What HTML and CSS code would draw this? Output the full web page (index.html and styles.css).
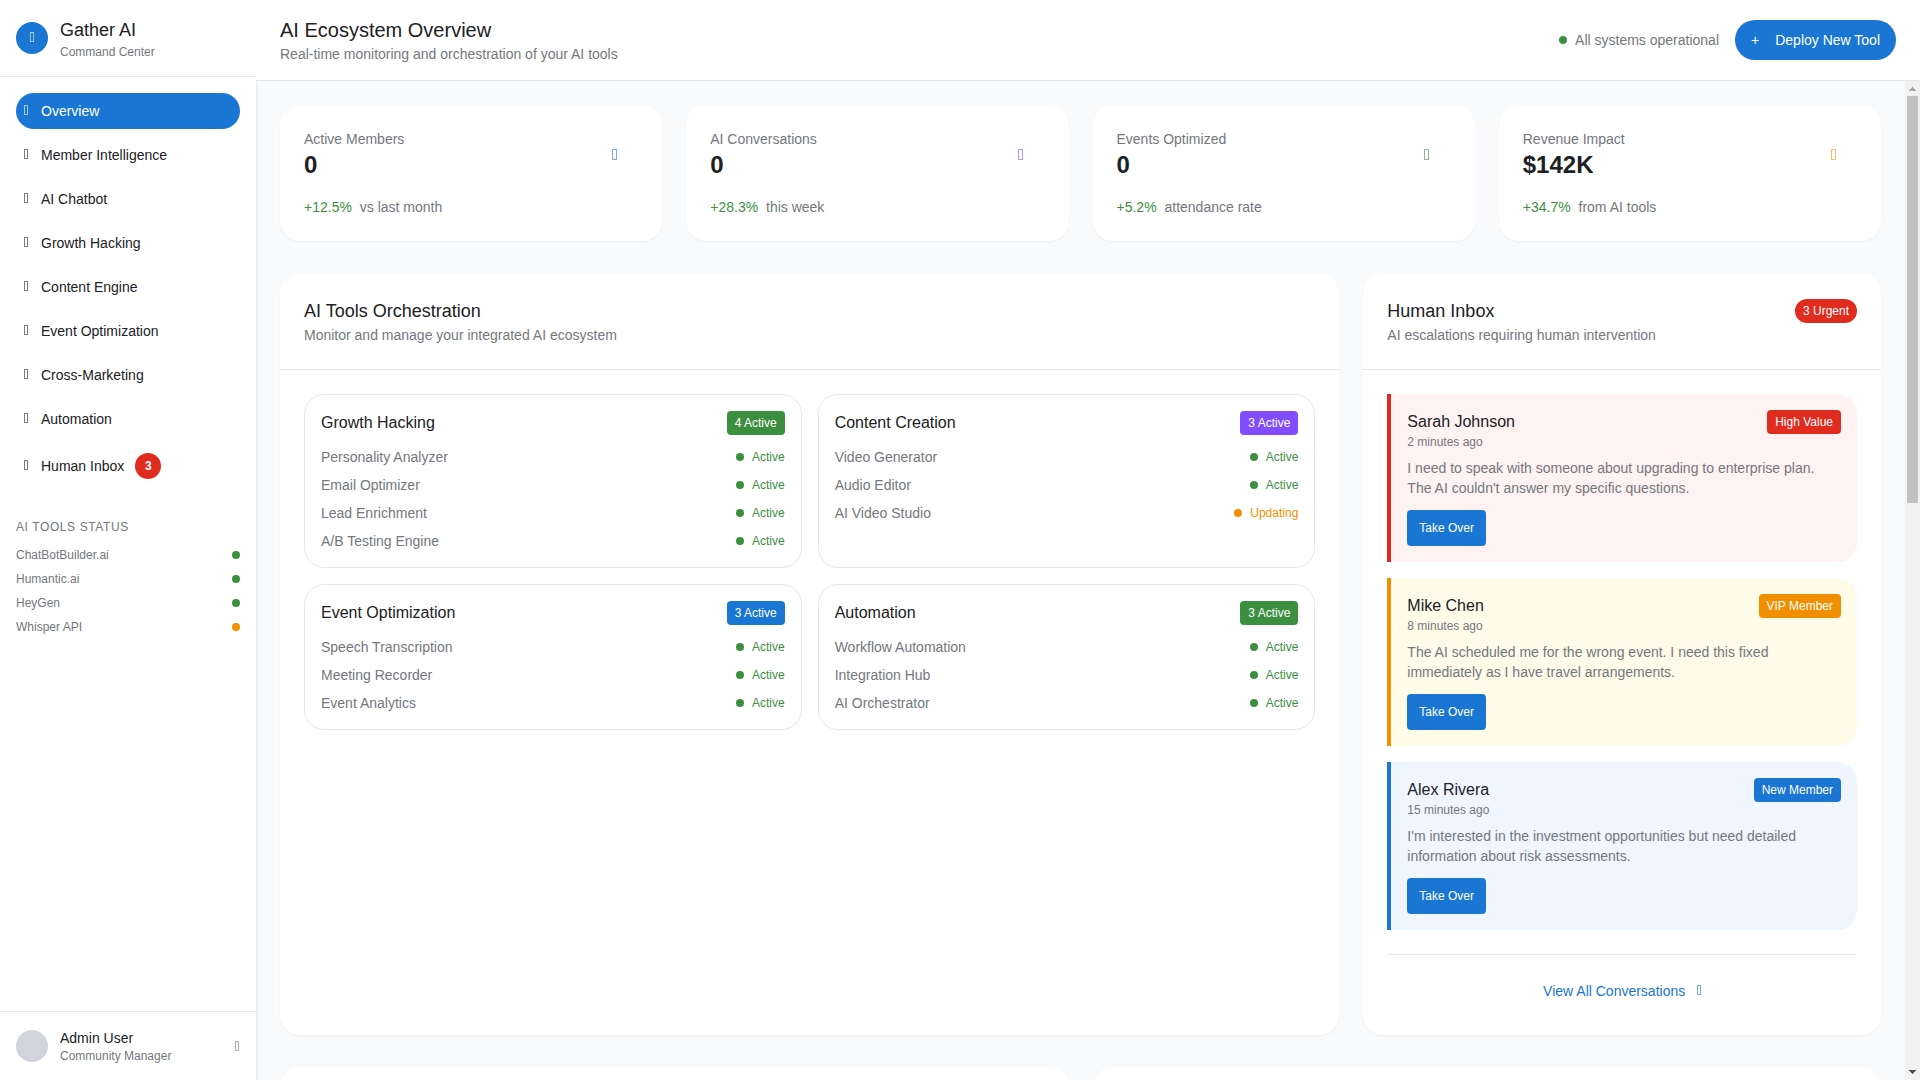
FILE: index.html
```html
<!DOCTYPE html>
<html lang="en">
<head>
    <meta charset="UTF-8">
    <meta name="viewport" content="width=device-width, initial-scale=1.0">
    <title>Gather AI Command Center</title>
    <link rel="stylesheet" href="styles.css">
</head>
<body>
    <!-- Sidebar -->
    <aside class="sidebar">
        <div class="brand">
            <div class="brand-logo"><i class="icon"></i></div>
            <div>
                <h1>Gather AI</h1>
                <p>Command Center</p>
            </div>
        </div>

        <nav class="side-nav">
            <a href="#overview" class="nav-item active"><i class="icon"></i><span>Overview</span></a>
            <a href="#members" class="nav-item"><i class="icon"></i><span>Member Intelligence</span></a>
            <a href="#chatbot" class="nav-item"><i class="icon"></i><span>AI Chatbot</span></a>
            <a href="#growth" class="nav-item"><i class="icon"></i><span>Growth Hacking</span></a>
            <a href="#content" class="nav-item"><i class="icon"></i><span>Content Engine</span></a>
            <a href="#events" class="nav-item"><i class="icon"></i><span>Event Optimization</span></a>
            <a href="#marketing" class="nav-item"><i class="icon"></i><span>Cross-Marketing</span></a>
            <a href="#automation" class="nav-item"><i class="icon"></i><span>Automation</span></a>
            <a href="#inbox" class="nav-item"><i class="icon"></i><span>Human Inbox</span><span class="count">3</span></a>

            <div class="tools-status">
                <h2>AI Tools Status</h2>
                <ul>
                    <li>ChatBotBuilder.ai <span class="dot"></span></li>
                    <li>Humantic.ai <span class="dot"></span></li>
                    <li>HeyGen <span class="dot"></span></li>
                    <li>Whisper API <span class="dot orange"></span></li>
                </ul>
            </div>
        </nav>

        <div class="user">
            <div class="avatar"></div>
            <div class="user-info">
                <p class="user-name">Admin User</p>
                <p class="user-role">Community Manager</p>
            </div>
            <button type="button" class="settings" aria-label="Settings"><i class="icon"></i></button>
        </div>
    </aside>

    <!-- Main -->
    <div class="main">
        <header class="topbar">
            <div>
                <h2>AI Ecosystem Overview</h2>
                <p>Real-time monitoring and orchestration of your AI tools</p>
            </div>
            <div class="topbar-right">
                <span class="system"><span class="dot"></span>All systems operational</span>
                <button type="button" class="deploy"><span class="plus">+</span>Deploy New Tool</button>
            </div>
        </header>

        <div class="scroll-area">
            <main class="content">
                <section class="stats">
                    <div class="card stat">
                        <div class="stat-top">
                            <div>
                                <p class="stat-label">Active Members</p>
                                <p class="stat-value">0</p>
                            </div>
                            <div class="stat-icon blue"><i class="icon"></i></div>
                        </div>
                        <p class="stat-trend"><span>+12.5%</span> vs last month</p>
                    </div>
                    <div class="card stat">
                        <div class="stat-top">
                            <div>
                                <p class="stat-label">AI Conversations</p>
                                <p class="stat-value">0</p>
                            </div>
                            <div class="stat-icon purple"><i class="icon"></i></div>
                        </div>
                        <p class="stat-trend"><span>+28.3%</span> this week</p>
                    </div>
                    <div class="card stat">
                        <div class="stat-top">
                            <div>
                                <p class="stat-label">Events Optimized</p>
                                <p class="stat-value">0</p>
                            </div>
                            <div class="stat-icon green"><i class="icon"></i></div>
                        </div>
                        <p class="stat-trend"><span>+5.2%</span> attendance rate</p>
                    </div>
                    <div class="card stat">
                        <div class="stat-top">
                            <div>
                                <p class="stat-label">Revenue Impact</p>
                                <p class="stat-value">$142K</p>
                            </div>
                            <div class="stat-icon orange"><i class="icon"></i></div>
                        </div>
                        <p class="stat-trend"><span>+34.7%</span> from AI tools</p>
                    </div>
                </section>

                <section class="panels">
                    <!-- AI tools -->
                    <div class="card">
                        <div class="panel-header">
                            <h3>AI Tools Orchestration</h3>
                            <p>Monitor and manage your integrated AI ecosystem</p>
                        </div>
                        <div class="tool-grid">
                            <div class="tool">
                                <div class="tool-head">
                                    <h4>Growth Hacking</h4>
                                    <span class="tag green">4 Active</span>
                                </div>
                                <ul>
                                    <li>Personality Analyzer <span class="state"><span class="dot"></span>Active</span></li>
                                    <li>Email Optimizer <span class="state"><span class="dot"></span>Active</span></li>
                                    <li>Lead Enrichment <span class="state"><span class="dot"></span>Active</span></li>
                                    <li>A/B Testing Engine <span class="state"><span class="dot"></span>Active</span></li>
                                </ul>
                            </div>
                            <div class="tool">
                                <div class="tool-head">
                                    <h4>Content Creation</h4>
                                    <span class="tag purple">3 Active</span>
                                </div>
                                <ul>
                                    <li>Video Generator <span class="state"><span class="dot"></span>Active</span></li>
                                    <li>Audio Editor <span class="state"><span class="dot"></span>Active</span></li>
                                    <li>AI Video Studio <span class="state updating"><span class="dot orange"></span>Updating</span></li>
                                </ul>
                            </div>
                            <div class="tool">
                                <div class="tool-head">
                                    <h4>Event Optimization</h4>
                                    <span class="tag blue">3 Active</span>
                                </div>
                                <ul>
                                    <li>Speech Transcription <span class="state"><span class="dot"></span>Active</span></li>
                                    <li>Meeting Recorder <span class="state"><span class="dot"></span>Active</span></li>
                                    <li>Event Analytics <span class="state"><span class="dot"></span>Active</span></li>
                                </ul>
                            </div>
                            <div class="tool">
                                <div class="tool-head">
                                    <h4>Automation</h4>
                                    <span class="tag green">3 Active</span>
                                </div>
                                <ul>
                                    <li>Workflow Automation <span class="state"><span class="dot"></span>Active</span></li>
                                    <li>Integration Hub <span class="state"><span class="dot"></span>Active</span></li>
                                    <li>AI Orchestrator <span class="state"><span class="dot"></span>Active</span></li>
                                </ul>
                            </div>
                        </div>
                    </div>

                    <!-- Human inbox -->
                    <div class="card">
                        <div class="panel-header">
                            <div class="panel-title">
                                <h3>Human Inbox</h3>
                                <span class="tag red urgent">3 Urgent</span>
                            </div>
                            <p>AI escalations requiring human intervention</p>
                        </div>
                        <div class="inbox">
                            <article class="message high">
                                <div class="message-head">
                                    <div>
                                        <h4>Sarah Johnson</h4>
                                        <p class="time">2 minutes ago</p>
                                    </div>
                                    <span class="tag red">High Value</span>
                                </div>
                                <p class="message-text">I need to speak with someone about upgrading to enterprise plan. The AI couldn't answer my specific questions.</p>
                                <button type="button" class="take-over">Take Over</button>
                            </article>
                            <article class="message vip">
                                <div class="message-head">
                                    <div>
                                        <h4>Mike Chen</h4>
                                        <p class="time">8 minutes ago</p>
                                    </div>
                                    <span class="tag orange">VIP Member</span>
                                </div>
                                <p class="message-text">The AI scheduled me for the wrong event. I need this fixed immediately as I have travel arrangements.</p>
                                <button type="button" class="take-over">Take Over</button>
                            </article>
                            <article class="message new">
                                <div class="message-head">
                                    <div>
                                        <h4>Alex Rivera</h4>
                                        <p class="time">15 minutes ago</p>
                                    </div>
                                    <span class="tag blue">New Member</span>
                                </div>
                                <p class="message-text">I'm interested in the investment opportunities but need detailed information about risk assessments.</p>
                                <button type="button" class="take-over">Take Over</button>
                            </article>
                        </div>
                        <div class="inbox-footer">
                            <button type="button" class="view-all">View All Conversations <i class="icon"></i></button>
                        </div>
                    </div>
                </section>

                <section class="more">
                    <div class="card"></div>
                    <div class="card"></div>
                </section>
            </main>

            <div class="scrollbar" aria-hidden="true">
                <svg width="15" height="15" viewBox="0 0 15 15"><path d="M4 10h7v-1h-1v-1h-1v-1h-1v-1h-1v1h-1v1h-1v1h-1z" fill="#a3a3a3"/></svg>
                <div class="track"><div class="thumb"></div></div>
                <svg width="15" height="15" viewBox="0 0 15 15"><path d="M4 5h7v1h-1v1h-1v1h-1v1h-1v-1h-1v-1h-1v-1h-1z" fill="#505050"/></svg>
            </div>
        </div>
    </div>
</body>
</html>
```
FILE: styles.css
```css
:root {
    --blue: #1976d2;
    --green: #3c8f3f;
    --orange: #f28f00;
    --red: #e02b1f;
    --purple: #824dff;
    --text: #202124;
    --muted: #74777d;
    --border: #e1e9ee;
    --page: #f8fafc;
}

*,
*::before,
*::after {
    box-sizing: border-box;
}

body {
    display: flex;
    height: 100vh;
    margin: 0;
    overflow: hidden;
    background: var(--page);
    color: var(--text);
    font-family: "Liberation Sans", Arial, sans-serif;
    font-size: 14px;
    line-height: 20px;
}

h1, h2, h3, h4, p, ul {
    margin: 0;
    padding: 0;
    font-weight: 400;
}

ul {
    list-style: none;
}

button {
    border: none;
    font-family: inherit;
    cursor: pointer;
}

/* hollow box icon */
.icon {
    display: block;
    flex: none;
    width: 4px;
    height: 10px;
    margin-bottom: 2px;
    border: 1px solid currentColor;
    opacity: 0.6;
}

.dot {
    flex: none;
    width: 8px;
    height: 8px;
    border-radius: 50%;
    background: var(--green);
}

.dot.orange {
    background: var(--orange);
}

/* sidebar */
.sidebar {
    display: flex;
    flex-direction: column;
    flex: none;
    width: 256px;
    background: #fff;
    box-shadow: 0 1px 3px rgba(60, 64, 67, 0.2);
}

.brand {
    display: flex;
    align-items: center;
    gap: 12px;
    padding: 16px;
    border-bottom: 1px solid var(--border);
}

.brand-logo {
    display: flex;
    align-items: center;
    justify-content: center;
    width: 32px;
    height: 32px;
    border-radius: 50%;
    background: var(--blue);
    color: #fff;
}

.brand h1 {
    font-size: 18px;
    line-height: 28px;
}

.brand p {
    color: var(--muted);
    font-size: 12px;
    line-height: 16px;
}

.side-nav {
    display: flex;
    flex-direction: column;
    flex: 1;
    gap: 8px;
    padding: 16px;
}

.nav-item {
    display: flex;
    align-items: center;
    padding: 8px;
    border-radius: 18px;
    color: var(--text);
    text-decoration: none;
}

.nav-item.active {
    background: var(--blue);
    color: #fff;
}

.nav-item .icon {
    margin-right: 13px;
}

.count {
    width: 26px;
    margin-left: 11px;
    border-radius: 50%;
    background: var(--red);
    color: #fff;
    font-size: 12px;
    font-weight: 700;
    line-height: 26px;
    text-align: center;
}

.tools-status {
    margin-top: 24px;
    color: var(--muted);
    font-size: 12px;
    line-height: 16px;
}

.tools-status h2 {
    margin-bottom: 12px;
    font-size: 12px;
    letter-spacing: 0.05em;
    text-transform: uppercase;
}

.tools-status ul {
    display: grid;
    gap: 8px;
}

.tools-status li {
    display: flex;
    align-items: center;
    justify-content: space-between;
}

.user {
    display: flex;
    align-items: center;
    gap: 12px;
    padding: 16px;
    border-top: 1px solid var(--border);
}

.avatar {
    width: 32px;
    height: 32px;
    border-radius: 50%;
    background: #d1d5db;
}

.user-info {
    flex: 1;
}

.user-role {
    color: var(--muted);
    font-size: 12px;
    line-height: 16px;
}

.settings {
    padding: 2px 1px 0;
    background: none;
    color: var(--muted);
}

/* top bar */
.main {
    display: flex;
    flex-direction: column;
    flex: 1;
    min-width: 0;
}

.topbar {
    position: relative;
    display: flex;
    align-items: center;
    justify-content: space-between;
    padding: 16px 24px;
    border-bottom: 1px solid var(--border);
    background: #fff;
}

.topbar h2 {
    font-size: 20px;
    line-height: 28px;
}

.topbar p {
    color: var(--muted);
}

.topbar-right {
    display: flex;
    align-items: center;
    gap: 16px;
}

.system {
    display: flex;
    align-items: center;
    gap: 8px;
    color: var(--muted);
}

.deploy {
    display: flex;
    align-items: center;
    gap: 16px;
    height: 40px;
    padding: 0 16px;
    border-radius: 20px;
    background: var(--blue);
    color: #fff;
    font-size: 14px;
}

/* content */
.scroll-area {
    display: flex;
    flex: 1;
    min-height: 0;
}

.content {
    flex: 1;
    padding: 24px;
    overflow-y: auto;
    scrollbar-width: none;
}

.scrollbar {
    display: flex;
    flex-direction: column;
    flex: none;
    width: 15px;
    background: #f1f1f1;
}

.scrollbar svg {
    flex: none;
}

.track {
    flex: 1;
    padding: 0 2px;
}

.thumb {
    height: 42%;
    background: #c1c1c1;
}

.card {
    border-radius: 20px;
    background: #fff;
    box-shadow: 0 1px 2px rgba(0, 0, 0, 0.05);
}

.stats {
    display: grid;
    grid-template-columns: repeat(4, 1fr);
    gap: 24px;
    margin-bottom: 32px;
}

.stat {
    padding: 24px;
}

.stat-top {
    display: flex;
    align-items: center;
    justify-content: space-between;
}

.stat-label {
    color: var(--muted);
}

.stat-value {
    font-size: 24px;
    font-weight: 700;
    line-height: 32px;
}

.stat-icon {
    display: flex;
    align-items: center;
    justify-content: center;
    width: 48px;
    height: 48px;
}

.stat-icon .icon {
    width: 5px;
    height: 11px;
}

.stat-icon.blue { color: var(--blue); }
.stat-icon.purple { color: var(--purple); }
.stat-icon.green { color: var(--green); }
.stat-icon.orange { color: var(--orange); }

.stat-trend {
    margin-top: 16px;
    color: var(--muted);
}

.stat-trend span {
    margin-right: 4px;
    color: var(--green);
}

.panels {
    display: grid;
    grid-template-columns: repeat(3, 1fr);
    gap: 24px;
    margin-bottom: 32px;
}

.panels > :first-child {
    grid-column: span 2;
}

.panel-header {
    padding: 24px;
    border-bottom: 1px solid var(--border);
}

.panel-title {
    display: flex;
    align-items: center;
    justify-content: space-between;
}

.panel-header h3 {
    font-size: 18px;
    line-height: 28px;
}

.panel-header p {
    color: var(--muted);
}

.tag {
    padding: 4px 8px;
    border-radius: 4px;
    color: #fff;
    font-size: 12px;
    line-height: 16px;
}

.tag.green { background: var(--green); }
.tag.purple { background: var(--purple); }
.tag.blue { background: var(--blue); }
.tag.orange { background: var(--orange); }
.tag.red { background: var(--red); }

.tag.urgent {
    border-radius: 12px;
}

.tool-grid {
    display: grid;
    grid-template-columns: repeat(2, 1fr);
    gap: 16px;
    padding: 24px;
}

.tool {
    padding: 16px;
    border: 1px solid var(--border);
    border-radius: 20px;
}

.tool-head {
    display: flex;
    align-items: center;
    justify-content: space-between;
    margin-bottom: 12px;
}

h4 {
    font-size: 16px;
    line-height: 24px;
}

.tool ul {
    display: grid;
    gap: 8px;
}

.tool li {
    display: flex;
    align-items: center;
    justify-content: space-between;
    color: var(--muted);
}

.state {
    display: flex;
    align-items: center;
    gap: 8px;
    color: var(--green);
    font-size: 12px;
    line-height: 16px;
}

.state.updating {
    color: var(--orange);
}

/* inbox */
.inbox {
    display: grid;
    gap: 16px;
    padding: 24px;
}

.message {
    padding: 16px;
    border-left: 4px solid;
    border-radius: 0 20px 20px 0;
}

.message.high { border-color: var(--red); background: #fef2f2; }
.message.vip { border-color: var(--orange); background: #fefce8; }
.message.new { border-color: var(--blue); background: #eff6ff; }

.message-head {
    display: flex;
    align-items: flex-start;
    justify-content: space-between;
    margin-bottom: 8px;
}

.time {
    color: var(--muted);
    font-size: 12px;
    line-height: 16px;
}

.message-text {
    margin-bottom: 12px;
    color: var(--muted);
}

.take-over {
    display: block;
    height: 36px;
    padding: 0 12px;
    border-radius: 4px;
    background: var(--blue);
    color: #fff;
    font-size: 12px;
}

.inbox-footer {
    margin: 0 24px;
    padding: 16px 0 24px;
    border-top: 1px solid var(--border);
}

.view-all {
    display: flex;
    align-items: center;
    justify-content: center;
    gap: 12px;
    width: 100%;
    height: 40px;
    background: none;
    color: var(--blue);
    font-size: 14px;
}

.more {
    display: grid;
    grid-template-columns: repeat(2, 1fr);
    gap: 24px;
}

.more .card {
    min-height: 1281px;
}
```
